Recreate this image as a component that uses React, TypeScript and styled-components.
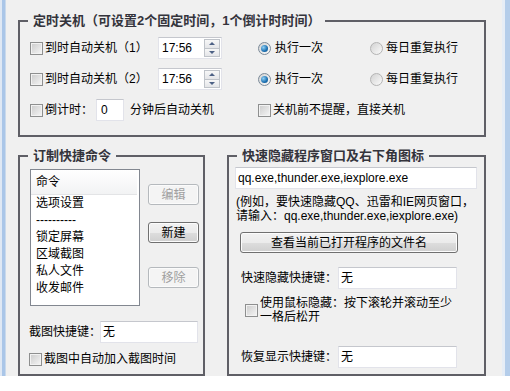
import React from 'react'
import styled, { createGlobalStyle } from 'styled-components'

const GlobalStyle = createGlobalStyle`
  html, body {
    margin: 0;
    padding: 0;
    background: #ffffff;
  }
  body {
    font-family: "Liberation Sans", "Noto Sans CJK SC", sans-serif;
    font-size: 12px;
    line-height: 14px;
    color: #000;
  }
`

const Window = styled.div`
  display: flex;
  width: 510px;
  height: 376px;
  overflow: hidden;
`

const Edge = styled.div<{ $side: 'left' | 'right' }>`
  flex-shrink: 0;
  width: ${p => (p.$side === 'left' ? 6 : 8)}px;
  background: ${p =>
    p.$side === 'left'
      ? 'linear-gradient(to right, #dfe8f4 0 2px, #aac6e8 2px 5px, #c9d9ec 5px)'
      : 'linear-gradient(to right, #e6edf6 0 3px, #b4cdea 3px)'};
`

const Client = styled.div`
  flex: 1;
  background: #f0f0f0;
  padding: 20px 16px 0 12px;
  display: flex;
  flex-direction: column;
  align-items: stretch;
  gap: 18px;
`

const Group = styled.section<{ $w?: number; $h: number }>`
  position: relative;
  flex-shrink: 0;
  border: 2px solid #5f5f66;
  box-sizing: border-box;
  height: ${p => p.$h}px;
  ${p => (p.$w ? `width: ${p.$w}px;` : 'flex: 1;')}
`

// title sits over the top border line
const Legend = styled.h2`
  position: absolute;
  left: 8px;
  top: -9px;
  margin: 0;
  padding: 0 5px;
  background: #f0f0f0;
  font-size: 13px;
  font-weight: bold;
  line-height: 16px;
  color: #34343c;
  white-space: nowrap;
`

/* ---------- small controls ---------- */

const CheckBox = styled.span`
  display: inline-block;
  flex-shrink: 0;
  width: 13px;
  height: 13px;
  box-sizing: border-box;
  border: 1px solid #8e8f8f;
  background: linear-gradient(135deg, #cbcbcb, #f6f6f6);
  box-shadow: inset 0 0 0 1px #f2f2f2;
`

const Radio = styled.span<{ $on?: boolean }>`
  position: relative;
  display: inline-block;
  flex-shrink: 0;
  width: 13px;
  height: 13px;
  box-sizing: border-box;
  border-radius: 50%;
  border: 1px solid ${p => (p.$on ? '#7b8a99' : '#b4b4b4')};
  background: linear-gradient(135deg, #d2d2d2, #fbfbfb);

  &::after {
    content: '';
    display: ${p => (p.$on ? 'block' : 'none')};
    position: absolute;
    left: 2px;
    top: 2px;
    width: 7px;
    height: 7px;
    border-radius: 50%;
    background: radial-gradient(circle at 35% 35%, #8fd0f5, #1b6fb0 60%, #0f4d86);
  }
`

const Check = styled.label<{ $gap?: number }>`
  display: flex;
  align-items: center;
  gap: ${p => p.$gap ?? 2}px;
  height: 14px;
  white-space: nowrap;
`

const Field = styled.div<{ $w: number }>`
  display: flex;
  align-items: center;
  width: ${p => p.$w}px;
  height: 22px;
  box-sizing: border-box;
  flex-shrink: 0;
  background: #fff;
  border: 1px solid #e2e3ea;
  border-top-color: #c5c7cd;
  padding-left: 2px;
  white-space: nowrap;
  overflow: hidden;
`

const Spin = styled.div`
  display: flex;
  flex-direction: column;
  margin-left: auto;
  margin-right: 1px;
  width: 16px;
  height: 18px;
`

const SpinBtn = styled.div<{ $dir: 'up' | 'down' }>`
  flex: 1;
  display: flex;
  align-items: center;
  justify-content: center;
  box-sizing: border-box;
  border: 1px solid #bfc3c9;
  ${p => (p.$dir === 'down' ? 'border-top: none;' : '')}
  background: linear-gradient(#f7f7f7, #e4e5e8);

  &::before {
    content: '';
    width: 0;
    height: 0;
    border-left: 3px solid transparent;
    border-right: 3px solid transparent;
    ${p =>
      p.$dir === 'up'
        ? 'border-bottom: 3px solid #4d6185;'
        : 'border-top: 3px solid #4d6185;'}
  }
`

const Button = styled.div<{ $disabled?: boolean; $w: number; $top?: number; $left?: number }>`
  display: flex;
  align-items: center;
  justify-content: center;
  flex-shrink: 0;
  width: ${p => p.$w}px;
  height: 21px;
  box-sizing: border-box;
  margin-top: ${p => p.$top ?? 0}px;
  margin-left: ${p => p.$left ?? 0}px;
  border-radius: 3px;
  border: 1px solid ${p => (p.$disabled ? '#b5b9bd' : '#707070')};
  color: ${p => (p.$disabled ? '#a0a0a0' : '#000')};
  background: ${p =>
    p.$disabled
      ? '#f4f4f4'
      : 'linear-gradient(#f2f2f2 0%, #ebebeb 50%, #dddddd 51%, #cfcfcf 100%)'};
  box-shadow: inset 0 0 0 1px ${p => (p.$disabled ? '#fbfbfb' : '#fcfcfc')};
`

/* ---------- top group ---------- */

const TopBody = styled.div`
  padding: 15px 0 0 10px;
  display: flex;
  flex-direction: column;
  gap: 9px;
`

const Row = styled.div`
  display: flex;
  align-items: center;
  height: 22px;
`

const Cell = styled.div<{ $w: number }>`
  display: flex;
  align-items: center;
  width: ${p => p.$w}px;
  flex-shrink: 0;
`

const Text = styled.span<{ $ml?: number }>`
  margin-left: ${p => p.$ml ?? 0}px;
  white-space: nowrap;
`

/* ---------- bottom groups ---------- */

const Bottom = styled.div`
  display: flex;
  gap: 22px;
`

const LeftBody = styled.div`
  padding: 12px 0 0 10px;
  display: flex;
  flex-direction: column;
`

const ListArea = styled.div`
  display: flex;
  gap: 8px;
`

const ListBox = styled.div`
  width: 110px;
  height: 137px;
  box-sizing: border-box;
  border: 1px solid #828790;
  background: #fff;
`

const ListHead = styled.div`
  height: 24px;
  line-height: 24px;
  padding-left: 5px;
  margin-right: 2px;
  background: linear-gradient(#ffffff, #f2f3f4);
  border-bottom: 1px solid #e3e4e6;
`

const ListItem = styled.div`
  height: 17px;
  line-height: 17px;
  padding-left: 5px;
  white-space: nowrap;
`

const ButtonCol = styled.div`
  display: flex;
  flex-direction: column;
`

const KeyRow = styled.div<{ $top: number; $left?: number; $label: number }>`
  display: flex;
  align-items: center;
  flex-shrink: 0;
  margin-top: ${p => p.$top}px;
  margin-left: ${p => p.$left ?? 0}px;

  & > span:first-child {
    width: ${p => p.$label}px;
    flex-shrink: 0;
    white-space: nowrap;
  }
`

const RightBody = styled.div`
  padding: 10px 0 0 6px;
  display: flex;
  flex-direction: column;
`

const Hint = styled.div`
  margin: 6px 0 0 1px;
  height: 28px;
  white-space: nowrap;
`

const MouseRow = styled.div`
  display: flex;
  align-items: center;
  gap: 2px;
  height: 28px;
  margin: 7px 0 0 10px;
`

const MouseText = styled.div`
  width: 196px;
`

const commands = ['选项设置', '----------', '锁定屏幕', '区域截图', '私人文件', '收发邮件']

function TimeBox() {
  return (
    <Field $w={64}>
      <Text $ml={1}>17:56</Text>
      <Spin>
        <SpinBtn $dir="up" />
        <SpinBtn $dir="down" />
      </Spin>
    </Field>
  )
}

function ShutdownRow({ n }: { n: number }) {
  return (
    <Row>
      <Cell $w={128}>
        <Check>
          <CheckBox />
          到时自动关机（{n}）
        </Check>
      </Cell>
      <Cell $w={100}>
        <TimeBox />
      </Cell>
      <Cell $w={112}>
        <Check $gap={4}>
          <Radio $on />
          执行一次
        </Check>
      </Cell>
      <Cell $w={110}>
        <Check $gap={3}>
          <Radio />
          每日重复执行
        </Check>
      </Cell>
    </Row>
  )
}

export default function App() {
  return (
    <>
      <GlobalStyle />
      <Window>
        <Edge $side="left" />
        <Client>
          <Group $h={108}>
            <Legend>定时关机（可设置2个固定时间，1个倒计时时间）</Legend>
            <TopBody>
              <ShutdownRow n={1} />
              <ShutdownRow n={2} />
              <Row>
                <Cell $w={228}>
                  <Check>
                    <CheckBox />
                    倒计时：
                  </Check>
                  <Field $w={28} style={{ marginLeft: 3 }}>
                    <Text $ml={2}>0</Text>
                  </Field>
                  <Text $ml={6}>分钟后自动关机</Text>
                </Cell>
                <Check>
                  <CheckBox />
                  关机前不提醒，直接关机
                </Check>
              </Row>
            </TopBody>
          </Group>

          <Bottom>
            <Group $w={187} $h={221}>
              <Legend>订制快捷命令</Legend>
              <LeftBody>
                <ListArea>
                  <ListBox>
                    <ListHead>命令</ListHead>
                    {commands.map(c => (
                      <ListItem key={c}>{c}</ListItem>
                    ))}
                  </ListBox>
                  <ButtonCol>
                    <Button $disabled $w={51} $top={15}>编辑</Button>
                    <Button $w={51} $top={17}>新建</Button>
                    <Button $disabled $w={51} $top={24}>移除</Button>
                  </ButtonCol>
                </ListArea>
                <KeyRow $top={15} $left={-1} $label={71}>
                  <span>截图快捷键：</span>
                  <Field $w={98}>无</Field>
                </KeyRow>
                <KeyRow $top={9} $left={-1} $label={0}>
                  <Check>
                    <CheckBox />
                    截图中自动加入截图时间
                  </Check>
                </KeyRow>
              </LeftBody>
            </Group>

            <Group $h={221}>
              <Legend>快速隐藏程序窗口及右下角图标</Legend>
              <RightBody>
                <Field $w={242}>qq.exe,thunder.exe,iexplore.exe</Field>
                <Hint>
                  (例如，要快速隐藏QQ、迅雷和IE网页窗口，
                  <br />
                  请输入：qq.exe,thunder.exe,iexplore.exe)
                </Hint>
                <Button $w={218} $top={9} $left={5}>查看当前已打开程序的文件名</Button>
                <KeyRow $top={14} $left={6} $label={97}>
                  <span>快速隐藏快捷键：</span>
                  <Field $w={119}>无</Field>
                </KeyRow>
                <MouseRow>
                  <CheckBox />
                  <MouseText>使用鼠标隐藏：按下滚轮并滚动至少一格后松开</MouseText>
                </MouseRow>
                <KeyRow $top={22} $left={6} $label={97}>
                  <span>恢复显示快捷键：</span>
                  <Field $w={119}>无</Field>
                </KeyRow>
              </RightBody>
            </Group>
          </Bottom>
        </Client>
        <Edge $side="right" />
      </Window>
    </>
  )
}
